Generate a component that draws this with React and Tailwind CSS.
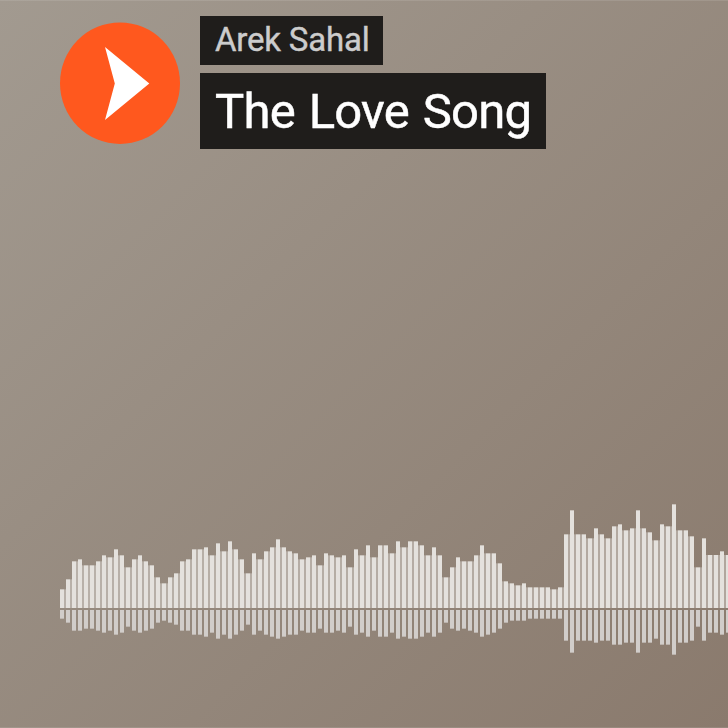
// Bar heights, in thirds of a pixel, above and below the centre line.
const UPPER = [
  56, 86, 140, 146, 128, 128, 140, 158, 152, 176, 158, 122, 146, 158, 140, 128, 92, 74, 92, 104,
  140, 146, 176, 176, 182, 158, 194, 170, 200, 176, 146, 104, 164, 146, 170, 182, 206, 182, 170, 164,
  146, 152, 158, 128, 164, 158, 152, 158, 122, 176, 158, 188, 152, 188, 188, 164, 200, 182, 200, 200,
  188, 158, 182, 158, 92, 122, 152, 140, 140, 158, 188, 164, 164, 134, 80, 74, 68, 74, 62, 62,
  62, 62, 56, 62, 221, 293, 221, 221, 209, 239, 221, 209, 245, 251, 233, 239, 293, 239, 227, 203,
  251, 245, 311, 233, 233, 215, 122, 209, 159, 159, 170, 159,
];
const LOWER = [
  26, 38, 62, 62, 56, 56, 62, 68, 62, 74, 68, 50, 62, 68, 62, 56, 38, 32, 38, 44,
  62, 62, 74, 74, 80, 68, 86, 74, 86, 74, 62, 44, 74, 62, 74, 80, 86, 80, 74, 74,
  62, 68, 68, 56, 68, 68, 62, 68, 50, 74, 68, 80, 62, 80, 80, 68, 86, 80, 86, 86,
  80, 68, 80, 68, 38, 56, 62, 56, 62, 68, 80, 74, 68, 56, 38, 32, 32, 32, 26, 26,
  26, 26, 26, 26, 92, 128, 92, 92, 92, 98, 92, 92, 104, 104, 98, 98, 128, 98, 98, 86,
  104, 104, 134, 98, 98, 92, 50, 92, 68, 68, 74, 68,
];

function Waveform() {
  return (
    <svg className="block h-[160px] w-[668px]" viewBox="0 0 668 160" aria-hidden="true">
      {UPPER.map((h, i) => (
        <g key={i}>
          <rect x={i * 6} y={108 - h / 3} width="4" height={h / 3} fill="#e4e1dd" />
          {i < UPPER.length - 1 && (
            <rect
              x={i * 6 + 4}
              y={108 - Math.min(h, UPPER[i + 1]) / 3}
              width="2"
              height={Math.min(h, UPPER[i + 1]) / 3}
              fill="#ffffff"
              fillOpacity="0.32"
            />
          )}
          <rect x={i * 6} y="110" width="4" height={LOWER[i] / 3} fill="#d1cdca" />
        </g>
      ))}
    </svg>
  );
}

export default function App() {
  return (
    <main className="flex h-[728px] w-[728px] flex-col justify-between overflow-hidden border-y border-white/10 bg-[linear-gradient(135deg,#a29a90_0%,#8a7a6d_100%)] bg-origin-border pb-[67px] pl-[60px] font-['Roboto','Liberation_Sans',sans-serif]">
      <header className="flex items-start">
        <button className="mt-[21px] h-[122px] w-[120px] shrink-0" aria-label="Play">
          <svg className="block h-full w-full" viewBox="0 0 120 122">
            <ellipse cx="60" cy="61.2" rx="60" ry="60.8" fill="#ff581e" />
            <path d="M45 25L89.3 61.5L45 98L54.8 61.5Z" fill="#fff" />
          </svg>
        </button>
        <div className="ml-5 flex flex-col items-start pt-[15px]">
          <p className="h-[49px] w-[183px] bg-[#1f1d1b] pl-[15px] text-[33px] leading-[47px] tracking-[-0.2px] whitespace-nowrap text-[#cccccc] [-webkit-text-stroke:0.4px]">
            Arek Sahal
          </p>
          <h1 className="mt-2 h-[75.5px] w-[346px] bg-[#1f1d1b] pl-[15px] text-[49px] leading-[78px] tracking-[-0.8px] whitespace-nowrap text-white [-webkit-text-stroke:0.5px] [word-spacing:2.5px]">
            The Love Song
          </h1>
        </div>
      </header>
      <Waveform />
    </main>
  );
}
